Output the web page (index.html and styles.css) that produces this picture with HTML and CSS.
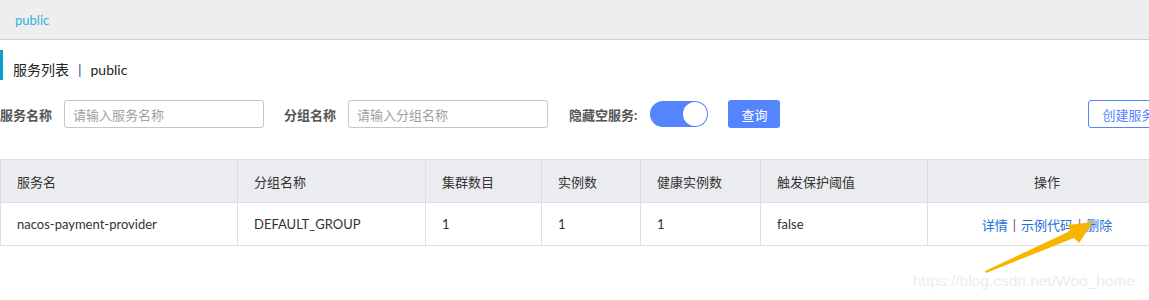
FILE: index.html
```html
<!DOCTYPE html>
<html lang="zh">
<head>
<meta charset="utf-8">
<link rel="stylesheet" href="styles.css">
</head>
<body>
<div class="page">
  <div class="topbar"><span class="ns">public</span></div>
  <div class="title"><span>服务列表</span><span class="sep">|</span><span>public</span></div>
  <div class="filters">
    <label class="lbl">服务名称</label>
    <div class="input">请输入服务名称</div>
    <label class="lbl lbl2">分组名称</label>
    <div class="input">请输入分组名称</div>
    <label class="lbl lbl3">隐藏空服务:</label>
    <div class="switch"><div class="knob"></div></div>
    <button class="btn-primary">查询</button>
    <div class="spacer"></div>
    <button class="btn-outline">创建服务</button>
  </div>
  <table class="grid">
    <colgroup>
      <col class="c1"><col class="c2"><col class="c3"><col class="c4"><col class="c5"><col class="c6"><col class="c7">
    </colgroup>
    <thead>
      <tr><th>服务名</th><th>分组名称</th><th>集群数目</th><th>实例数</th><th>健康实例数</th><th>触发保护阈值</th><th class="center">操作</th></tr>
    </thead>
    <tbody>
      <tr><td>nacos-payment-provider</td><td>DEFAULT_GROUP</td><td>1</td><td>1</td><td>1</td><td>false</td>
        <td class="center"><a class="lnk">详情</a><span class="bar">|</span><a class="lnk">示例代码</a><span class="bar">|</span><a class="lnk">删除</a></td></tr>
    </tbody>
  </table>
  <svg class="arrow" width="130" height="60" viewBox="0 0 130 60">
    <polygon points="5,56 90,16 88,10 113,7 99,28 94,23 6,58" fill="#f7b500"/>
  </svg>
  <div class="watermark">https://blog.csdn.net/Woo_home</div>
</div>
</body>
</html>
```
FILE: styles.css
```css
html, body {
  margin: 0;
  padding: 0;
  background: #fff;
  overflow: hidden;
}
.page {
  position: relative;
  width: 1175px;
  height: 300px;
  font-family: Lato, "Noto Sans CJK SC", sans-serif;
  color: #333;
  font-size: 13px;
}
.topbar {
  height: 39px;
  background: #eeeeee;
  border-bottom: 1px solid #cfcfcf;
  display: flex;
  align-items: center;
  padding-left: 15px;
}
.ns {
  color: #1fb5e3;
  font-size: 13px;
}
.title {
  margin-top: 10px;
  height: 30px;
  border-left: 3px solid #0d9fd0;
  padding-left: 10px;
  box-sizing: border-box;
  display: flex;
  align-items: center;
  padding-top: 8px;
  font-size: 14px;
  color: #222;
}
.sep {
  margin: 0 9px;
  color: #1a4f9c;
}
.filters {
  margin-top: 20px;
  display: flex;
  align-items: center;
  height: 28px;
}
.lbl {
  font-weight: bold;
  color: #555;
  font-size: 13px;
  margin-right: 12px;
}
.lbl2 { margin-left: 20px; }
.lbl3 { margin-left: 21px; margin-right: 13px; }
.input {
  width: 200px;
  height: 28px;
  box-sizing: border-box;
  border: 1px solid #c4c6cf;
  border-radius: 3px;
  padding-left: 8px;
  color: #a0a0a0;
  font-size: 13px;
  display: flex;
  align-items: center;
}
.switch {
  width: 58px;
  height: 26px;
  border-radius: 13px;
  background: #5584ff;
  position: relative;
  margin-right: 20px;
}
.knob {
  position: absolute;
  right: 1px;
  top: 1px;
  width: 24px;
  height: 24px;
  border-radius: 50%;
  background: #fff;
}
.btn-primary {
  width: 52px;
  height: 28px;
  border: none;
  border-radius: 3px;
  background: #5584ff;
  color: #fff;
  font-family: inherit;
  font-size: 13px;
  padding: 0;
}
.spacer { width: 308px; }
.btn-outline {
  width: 80px;
  height: 28px;
  border: 1px solid #5584ff;
  border-radius: 3px;
  background: #fff;
  color: #5584ff;
  font-family: inherit;
  font-size: 13px;
  padding: 0;
}
.grid {
  margin-top: 31px;
  border-collapse: collapse;
  table-layout: fixed;
  width: 1175px;
}
.c1 { width: 237px; }
.c2 { width: 188px; }
.c3 { width: 116px; }
.c4 { width: 99px; }
.c5 { width: 120px; }
.c6 { width: 167px; }
.grid th, .grid td {
  border: 1px solid #dcdee3;
  text-align: left;
  padding: 0 0 0 16px;
  font-weight: normal;
  font-size: 13px;
  color: #333;
  white-space: nowrap;
}
.grid th {
  background: #ebecf0;
  height: 42px;
}
.grid td {
  height: 42px;
}
.grid .center {
  text-align: center;
  padding: 0 8px 0 0;
}
.lnk { color: #1f6fd8; }
.bar { color: #8a3a8c; margin: 0 5px; }
.arrow {
  position: absolute;
  left: 980px;
  top: 215px;
}
.watermark {
  position: absolute;
  left: 913px;
  top: 272px;
  font-family: "Liberation Sans", Arial, sans-serif;
  font-size: 15.5px;
  color: #ececec;
}
```
